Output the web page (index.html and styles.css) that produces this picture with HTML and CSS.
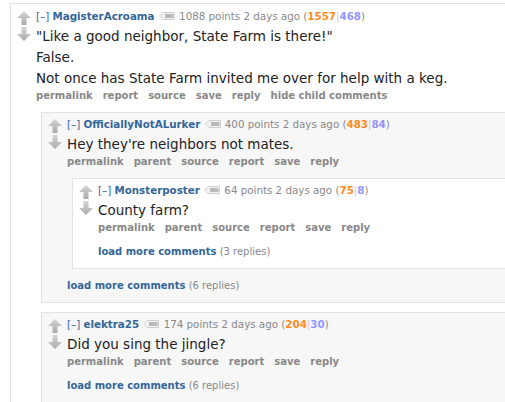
FILE: index.html
```html
<!DOCTYPE html>
<html lang="en">
<head>
    <meta charset="UTF-8">
    <meta name="viewport" content="width=device-width, initial-scale=1.0">
    <title>Comments</title>
    <link rel="stylesheet" href="styles.css">
</head>
<body>
<!-- shared vote arrow and user tag shapes -->
<svg class="defs" width="0" height="0">
    <defs>
        <linearGradient id="arrowfill" x1="0" y1="0" x2="0" y2="1">
            <stop offset="0" stop-color="#d4d4d4"/>
            <stop offset="1" stop-color="#acacac"/>
        </linearGradient>
        <symbol id="up" viewBox="0 0 14 14">
            <polygon points="7,0 14,7 9.5,7 9.5,14 4.5,14 4.5,7 0,7" fill="url(#arrowfill)"/>
        </symbol>
        <symbol id="down" viewBox="0 0 14 14">
            <polygon points="4.5,0 9.5,0 9.5,7 14,7 7,14 0,7 4.5,7" fill="url(#arrowfill)"/>
        </symbol>
        <symbol id="usertag" viewBox="0 0 16 8">
            <path d="M0.5 4 L4 0.5 H15.5 V7.5 H4 Z" fill="#f2f2f2" stroke="#cfcfcf"/>
            <rect x="6" y="2" width="8.5" height="4" fill="#b9b9b9"/>
        </symbol>
    </defs>
</svg>

<div class="thread">
    <div class="comment odd top">
        <div class="midcol">
            <svg class="arrow"><use href="#up"/></svg>
            <svg class="arrow"><use href="#down"/></svg>
        </div>
        <div class="entry">
            <p class="tagline">
                <a class="expand">[–]</a> <a class="author">MagisterAcroama</a>
                <svg class="tag"><use href="#usertag"/></svg>
                1088 points 2 days ago (<b class="ups">1557</b><span class="sep">|</span><b class="downs">468</b>)
            </p>
            <div class="md">
                <p>"Like a good neighbor, State Farm is there!"</p>
                <p>False.</p>
                <p>Not once has State Farm invited me over for help with a keg.</p>
            </div>
            <ul class="buttons">
                <li>permalink</li>
                <li>report</li>
                <li>source</li>
                <li>save</li>
                <li>reply</li>
                <li>hide child comments</li>
            </ul>

            <div class="child">
                <div class="comment even">
                    <div class="midcol">
                        <svg class="arrow"><use href="#up"/></svg>
                        <svg class="arrow"><use href="#down"/></svg>
                    </div>
                    <div class="entry">
                        <p class="tagline">
                            <a class="expand">[–]</a> <a class="author">OfficiallyNotALurker</a>
                            <svg class="tag"><use href="#usertag"/></svg>
                            400 points 2 days ago (<b class="ups">483</b><span class="sep">|</span><b class="downs">84</b>)
                        </p>
                        <div class="md">
                            <p>Hey they're neighbors not mates.</p>
                        </div>
                        <ul class="buttons">
                            <li>permalink</li>
                            <li>parent</li>
                            <li>source</li>
                            <li>report</li>
                            <li>save</li>
                            <li>reply</li>
                        </ul>

                        <div class="child">
                            <div class="comment odd">
                                <div class="midcol">
                                    <svg class="arrow"><use href="#up"/></svg>
                                    <svg class="arrow"><use href="#down"/></svg>
                                </div>
                                <div class="entry">
                                    <p class="tagline">
                                        <a class="expand">[–]</a> <a class="author">Monsterposter</a>
                                        <svg class="tag"><use href="#usertag"/></svg>
                                        64 points 2 days ago (<b class="ups">75</b><span class="sep">|</span><b class="downs">8</b>)
                                    </p>
                                    <div class="md">
                                        <p>County farm?</p>
                                    </div>
                                    <ul class="buttons">
                                        <li>permalink</li>
                                        <li>parent</li>
                                        <li>source</li>
                                        <li>report</li>
                                        <li>save</li>
                                        <li>reply</li>
                                    </ul>
                                    <p class="more"><a>load more comments</a> (3 replies)</p>
                                </div>
                            </div>
                        </div>
                        <p class="more"><a>load more comments</a> (6 replies)</p>
                    </div>
                </div>

                <div class="comment even">
                    <div class="midcol">
                        <svg class="arrow"><use href="#up"/></svg>
                        <svg class="arrow"><use href="#down"/></svg>
                    </div>
                    <div class="entry">
                        <p class="tagline">
                            <a class="expand">[–]</a> <a class="author">elektra25</a>
                            <svg class="tag"><use href="#usertag"/></svg>
                            174 points 2 days ago (<b class="ups">204</b><span class="sep">|</span><b class="downs">30</b>)
                        </p>
                        <div class="md">
                            <p>Did you sing the jingle?</p>
                        </div>
                        <ul class="buttons">
                            <li>permalink</li>
                            <li>parent</li>
                            <li>source</li>
                            <li>report</li>
                            <li>save</li>
                            <li>reply</li>
                        </ul>
                        <p class="more"><a>load more comments</a> (6 replies)</p>
                    </div>
                </div>
            </div>
        </div>
    </div>
</div>

</body>
</html>
```

FILE: styles.css
```css
html, body {
    margin: 0;
    padding: 0;
    overflow: hidden;
    background: #fff;
}
body {
    font-family: "DejaVu Sans", Verdana, sans-serif;
    color: #222;
}
.defs {
    position: absolute;
}
.thread {
    padding: 3px 0 0 10px;
}
.comment {
    display: grid;
    grid-template-columns: 25px 1fr;
    border: 1px solid #e3e3e3;
    border-right: none;
    padding: 4px 0 9px 0;
}
.comment.top {
    padding-top: 5px;
}
.odd {
    background: #fff;
}
.even {
    background: #f7f7f8;
}
.midcol {
    display: flex;
    flex-direction: column;
    gap: 2px;
    padding: 2px 0 0 6px;
}
.arrow {
    width: 14px;
    height: 14px;
    display: block;
}
.entry {
    min-width: 0;
}
.tagline {
    margin: 0;
    font-size: 10.3px;
    line-height: 14px;
    color: #888;
    white-space: nowrap;
}
.expand {
    color: #369;
}
.author {
    color: #369;
    font-weight: bold;
}
.tag {
    width: 16px;
    height: 8px;
    vertical-align: 0;
    margin: 0 1px;
}
.ups {
    color: #ff8b24;
}
.downs {
    color: #9494ff;
}
.sep {
    color: #c8c8c8;
}
.md {
    font-size: 13.5px;
    line-height: 16px;
    padding: 5px 0 3px;
}
.md p {
    margin: 0;
}
.md p + p {
    margin-top: 5px;
}
.buttons {
    display: flex;
    gap: 10px;
    list-style: none;
    margin: 0;
    padding: 0;
    font-size: 10px;
    font-weight: bold;
    line-height: 14px;
    color: #888;
}
.child {
    margin: 9px 0 0 5px;
}
.child > .comment + .comment {
    margin-top: 9px;
}
.more {
    margin: 10px 0 0;
    font-size: 10px;
    line-height: 14px;
    color: #888;
}
.more a {
    color: #369;
    font-weight: bold;
}
```
